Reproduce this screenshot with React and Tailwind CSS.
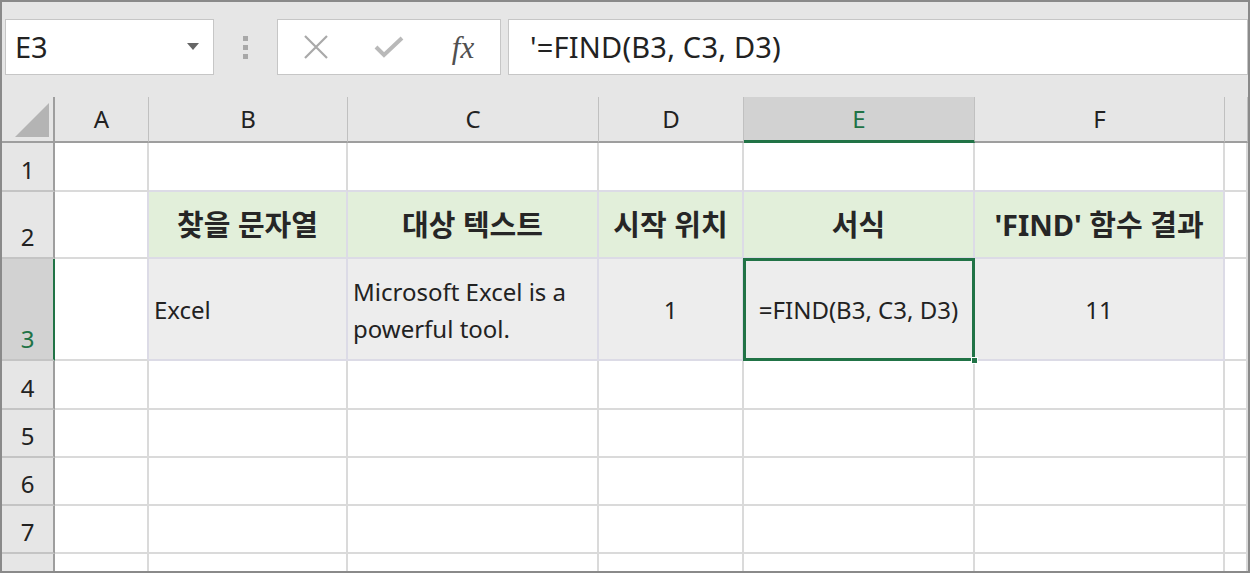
import React from 'react';

const FONT = { fontFamily: '"Noto Sans", "Noto Sans CJK KR", sans-serif' };

const COLS = ['A', 'B', 'C', 'D', 'E', 'F', ''];
const ROW_H = ['h-[49px]', 'h-[67px]', 'h-[102px]', 'h-[49px]', 'h-[48px]', 'h-[48px]', 'h-[48px]', 'h-[48px]'];

const Toolbar = () => (
  <div className="flex items-start h-[95px] pt-[17px] bg-[#e6e6e6]">
    <div className="ml-[3px] w-[209px] h-[56px] bg-white border border-[#c6c6c6] flex items-center justify-between pl-[9px] pr-[14px]">
      <span className="text-[29px] text-[#222]">E3</span>
      <svg width="12" height="8" viewBox="0 0 12 8">
        <path d="M0 0 L12 0 L6 7 Z" fill="#666" />
      </svg>
    </div>
    <div className="w-[63px] h-[56px] flex flex-col items-center justify-center gap-[4px]">
      <span className="w-[5px] h-[5px] bg-[#a8a8a8]" />
      <span className="w-[5px] h-[5px] bg-[#a8a8a8]" />
      <span className="w-[5px] h-[5px] bg-[#a8a8a8]" />
    </div>
    <div className="w-[224px] h-[56px] bg-white border border-[#c6c6c6] flex items-center">
      <div className="w-[74px] flex justify-center pl-[2px]">
        <svg width="26" height="26" viewBox="0 0 26 26">
          <path d="M2 2 L24 24 M24 2 L2 24" stroke="#a9a9a9" strokeWidth="2.2" />
        </svg>
      </div>
      <div className="w-[74px] flex justify-center">
        <svg width="30" height="24" viewBox="0 0 30 24">
          <path d="M2 12 L10 20 L28 3" stroke="#b9b9b9" strokeWidth="4" fill="none" />
        </svg>
      </div>
      <div className="w-[74px] flex justify-center">
        <span className="text-[31px] italic text-[#505050] leading-none" style={{ fontFamily: '"Liberation Serif", "DejaVu Serif", serif' }}>
          fx
        </span>
      </div>
    </div>
    <div className="ml-[7px] flex-1 h-[56px] bg-white border border-[#c6c6c6] flex items-center pl-[21px]">
      <span className="text-[29px] text-[#222] tracking-[0.2px]">'=FIND(B3, C3, D3)</span>
    </div>
  </div>
);

const ColHeader = ({ label, selected }) => (
  <div
    className={
      selected
        ? 'bg-[#d2d2d2] text-[#217346] border-r border-r-[#c0c0c0] border-b-[3px] border-b-[#217346] flex items-center justify-center text-[24px]'
        : 'bg-[#e6e6e6] text-[#222] border-r border-r-[#c0c0c0] border-b-2 border-b-[#9e9e9e] flex items-center justify-center text-[24px]'
    }
  >
    {label}
  </div>
);

const RowHeader = ({ n, h, selected }) => (
  <div
    className={`${h} flex items-end justify-center pb-[2px] text-[24px] border-b-2 border-b-[#c4c4c4] ${
      selected
        ? 'bg-[#d2d2d2] text-[#217346] border-r-2 border-r-[#217346]'
        : 'bg-[#e6e6e6] text-[#222] border-r-2 border-r-[#9e9e9e]'
    }`}
  >
    {n}
  </div>
);

const Cell = ({ className = '', children }) => (
  <div className={`border-r-2 border-b-2 text-[24px] text-[#222] ${className}`}>{children}</div>
);

export default function App() {
  const heads = ['찾을 문자열', '대상 텍스트', '시작 위치', '서식', "'FIND' 함수 결과"];

  return (
    <div className="w-[1250px] h-[573px] border-2 border-[#8a8a8a] overflow-hidden bg-white" style={FONT}>
      <Toolbar />
      <div className="grid grid-cols-[53px_94px_199px_251px_145px_231px_250px_1fr]">
        <div className="h-[46px] bg-[#e6e6e6] border-r-2 border-r-[#9e9e9e] border-b-2 border-b-[#9e9e9e] flex items-end justify-end pr-[4px] pb-[4px]">
          <svg width="34" height="34" viewBox="0 0 34 34">
            <path d="M34 0 L34 34 L0 34 Z" fill="#b4b4b4" />
          </svg>
        </div>
        {COLS.map((c) => (
          <ColHeader key={c || 'g'} label={c} selected={c === 'E'} />
        ))}

        {/* row 1 */}
        <RowHeader n={1} h={ROW_H[0]} />
        <Cell className="border-[#dadada]" />
        {[0, 1, 2, 3, 4].map((i) => (
          <Cell key={i} className="border-r-[#dadada] border-b-[#dcdbe6]" />
        ))}
        <Cell className="border-[#dadada]" />

        {/* row 2 */}
        <RowHeader n={2} h={ROW_H[1]} />
        <Cell className="border-r-[#dcdbe6] border-b-[#dadada]" />
        {heads.map((t) => (
          <Cell key={t} className="bg-[#e2efda] border-[#dcdbe6] flex items-center justify-center font-bold text-[29px] text-[#262626]">
            {t}
          </Cell>
        ))}
        <Cell className="border-[#dadada]" />

        {/* row 3 */}
        <RowHeader n={3} h={ROW_H[2]} selected />
        <Cell className="border-r-[#dcdbe6] border-b-[#dadada]" />
        <Cell className="bg-[#ededed] border-[#dcdbe6] flex items-center pl-[5px] pt-[2px]">Excel</Cell>
        <Cell className="bg-[#ededed] border-[#dcdbe6] flex items-center pl-[5px] pt-[2px] leading-[37px]">
          <div>
            Microsoft Excel is a
            <br />
            powerful tool.
          </div>
        </Cell>
        <Cell className="bg-[#ededed] border-[#dcdbe6] flex items-center justify-center pt-[2px]">1</Cell>
        <Cell className="bg-[#ededed] border-[#dcdbe6] flex items-center justify-center pt-[2px] relative">
          =FIND(B3, C3, D3)
          <div className="absolute -left-[1px] -top-[1px] -right-[2px] -bottom-[2px] border-[3px] border-[#217346]" />
          <div className="absolute -right-[5px] -bottom-[5px] w-[7px] h-[7px] bg-[#217346] border border-white" />
        </Cell>
        <Cell className="bg-[#ededed] border-[#dcdbe6] flex items-center justify-center pt-[2px]">11</Cell>
        <Cell className="border-[#dadada]" />

        {/* rows 4-8 */}
        {[4, 5, 6, 7, 8].map((n) => (
          <React.Fragment key={n}>
            <RowHeader n={n} h={ROW_H[n - 1]} />
            {COLS.map((c) => (
              <Cell key={c || 'g'} className="border-[#dadada]" />
            ))}
          </React.Fragment>
        ))}
      </div>
    </div>
  );
}
